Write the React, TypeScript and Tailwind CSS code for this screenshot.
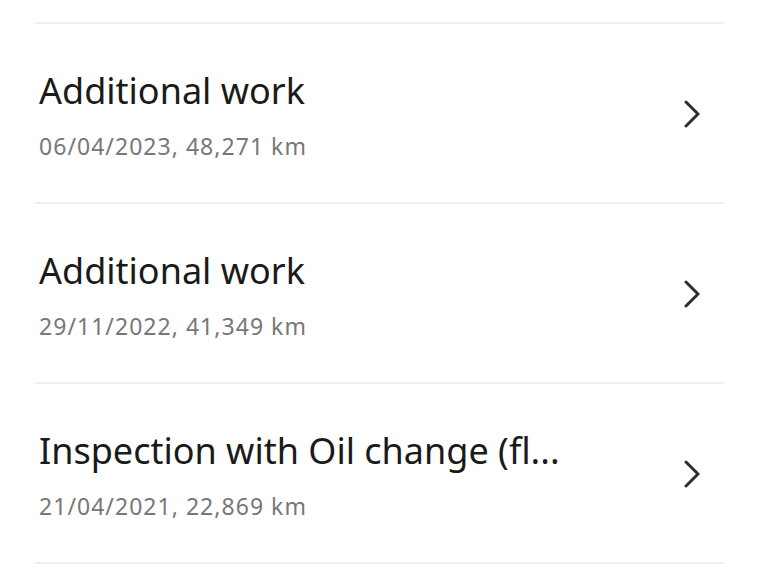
const entries = [
  { title: "Additional work", meta: "06/04/2023, 48,271 km" },
  { title: "Additional work", meta: "29/11/2022, 41,349 km" },
  { title: "Inspection with Oil change (fl...", meta: "21/04/2021, 22,869 km" },
];

function Chevron() {
  return (
    <svg width="18" height="28" viewBox="0 0 18 28" fill="none" className="shrink-0">
      <polyline
        points="3,2 15,14 3,26"
        stroke="#2e2e2e"
        strokeWidth="3"
        strokeLinecap="round"
        strokeLinejoin="round"
      />
    </svg>
  );
}

function HistoryRow({ title, meta }: { title: string; meta: string }) {
  return (
    <li className="border-b-2 border-[#eeeeee]">
      <button className="flex h-[178px] w-full items-center justify-between pt-[2px] pl-1 pr-[23px] text-left">
        <div className="flex flex-col">
          <span className="text-[36px] leading-[44px] text-[#1a1a1a]">{title}</span>
          <span className="mt-[19px] text-[23px] leading-[28px] tracking-[0.045em] text-[#777777]">
            {meta}
          </span>
        </div>
        <Chevron />
      </button>
    </li>
  );
}

export default function App() {
  return (
    <div
      className="min-h-screen bg-white px-[35px] pt-[22px]"
      style={{ fontFamily: '"Noto Sans", "Open Sans", sans-serif' }}
    >
      <ul className="border-t-2 border-[#eeeeee]">
        {entries.map((e, i) => (
          <HistoryRow key={i} title={e.title} meta={e.meta} />
        ))}
      </ul>
    </div>
  );
}
